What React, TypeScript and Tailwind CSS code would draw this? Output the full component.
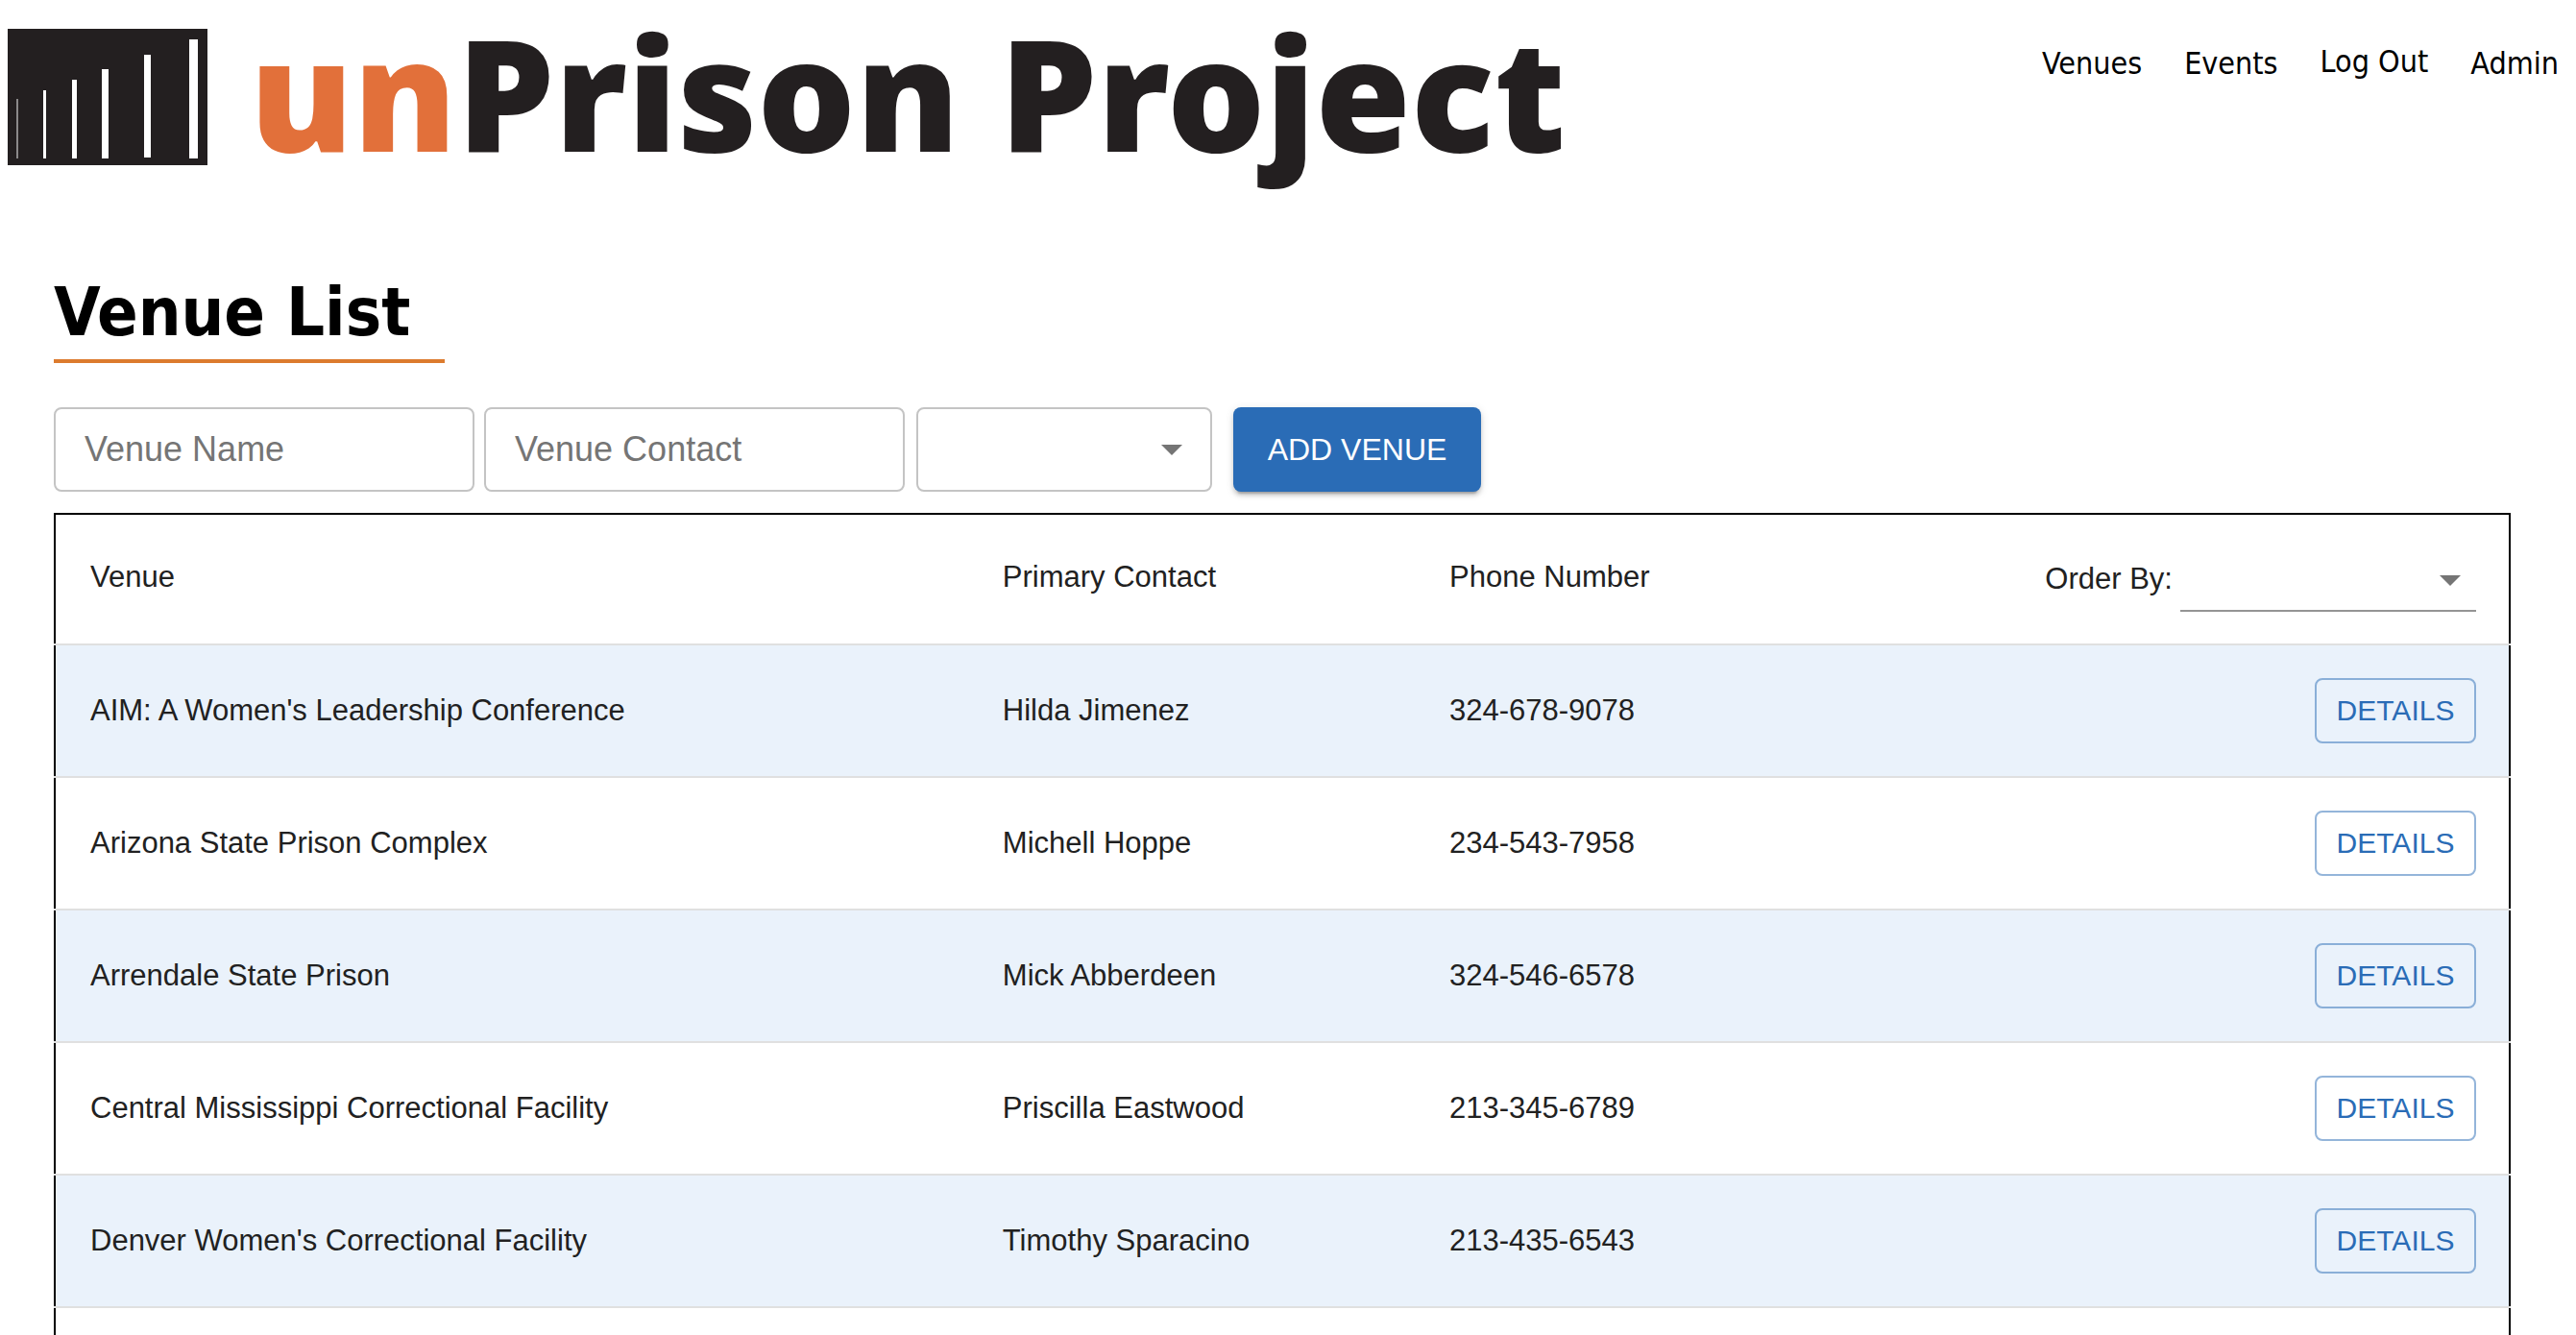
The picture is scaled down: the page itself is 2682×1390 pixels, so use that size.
import React from "react";

type Venue = { name: string; contact: string; phone: string };

const venues: Venue[] = [
  { name: "AIM: A Women's Leadership Conference", contact: "Hilda Jimenez", phone: "324-678-9078" },
  { name: "Arizona State Prison Complex", contact: "Michell Hoppe", phone: "234-543-7958" },
  { name: "Arrendale State Prison", contact: "Mick Abberdeen", phone: "324-546-6578" },
  { name: "Central Mississippi Correctional Facility", contact: "Priscilla Eastwood", phone: "213-345-6789" },
  { name: "Denver Women's Correctional Facility", contact: "Timothy Sparacino", phone: "213-435-6543" },
];

function Logo() {
  return (
    <a href="#home" className="flex h-[204px] items-start pl-2">
      <svg viewBox="0 0 208 142" className="mt-[30px] h-[142px] w-[208px] shrink-0" aria-hidden="true">
        <rect width="208" height="142" fill="#231f20" />
        <rect x="9" y="73" width="2" height="62" fill="#8b898a" />
        <rect x="37" y="64" width="3" height="71" fill="#fff" />
        <rect x="67" y="53" width="5" height="82" fill="#fff" />
        <rect x="98" y="42" width="7" height="93" fill="#fff" />
        <rect x="142" y="27" width="7" height="107" fill="#fff" />
        <rect x="189" y="11" width="9" height="124" fill="#fff" />
      </svg>
      <span className="ml-11 font-['Noto_Sans',sans-serif] text-[161px] leading-[192px] font-black whitespace-nowrap text-[#231f20]">
        <span className="text-[#e2703a]">un</span>Prison Project
      </span>
    </a>
  );
}

function Caret({ className }: { className: string }) {
  return (
    <svg viewBox="0 0 22 11" aria-hidden="true" className={`pointer-events-none absolute h-[11px] w-[22px] ${className}`}>
      <path d="M0 0h22L11 11z" fill="#757575" />
    </svg>
  );
}

function SearchField({ label }: { label: string }) {
  return (
    <input
      type="text"
      aria-label={label}
      placeholder={label}
      className="h-[88px] w-[438px] rounded-lg border-2 border-[#c4c4c4] px-[30px] text-[36px] text-black/85 placeholder:text-[#757575] placeholder:opacity-100"
    />
  );
}

export default function App() {
  return (
    <div className="h-screen overflow-hidden bg-white font-['Liberation_Sans',Arial,sans-serif] text-[#212121]">
      <header className="flex items-start justify-between pr-[18px]">
        <Logo />
        <nav className="flex items-start gap-[44px] pt-11 font-['DejaVu_Sans_Condensed','DejaVu_Sans',sans-serif] text-[32px] leading-[44px] text-black">
          <a href="#venues">Venues</a>
          <a href="#events">Events</a>
          <button type="button" className="-mt-0.5">Log Out</button>
          <a href="#admin">Admin</a>
        </nav>
      </header>

      <main className="pr-[68px] pl-14">
        <h1 className="mt-[76px] inline-block border-b-4 border-[#dc7b2e] pr-9 pb-1 font-['DejaVu_Sans_Condensed','DejaVu_Sans',sans-serif] text-[70px] leading-[90px] font-bold text-black">
          Venue List
        </h1>

        <form className="mt-[46px] flex items-center">
          <div className="flex gap-2.5">
            <SearchField label="Venue Name" />
            <SearchField label="Venue Contact" />
          </div>
          <div className="relative ml-3">
            <select aria-label="Venue filter" className="block h-[88px] w-[308px] appearance-none rounded-lg border-2 border-[#c4c4c4] px-7 text-[32px]">
              <option value=""></option>
            </select>
            <Caret className="top-[39px] right-[31px]" />
          </div>
          <button
            type="button"
            className="ml-[22px] h-[88px] w-[258px] rounded-lg bg-[#2a6cb6] text-[32px] text-white shadow-[0_6px_2px_-4px_rgba(0,0,0,0.2),0_4px_4px_0_rgba(0,0,0,0.14),0_2px_10px_0_rgba(0,0,0,0.12)]"
          >
            ADD VENUE
          </button>
        </form>

        <table className="mt-[22px] w-full table-fixed border-collapse border-2 border-black text-left text-[31px] leading-[44px]">
          <colgroup>
            <col className="w-[37.2%]" />
            <col className="w-[18.2%]" />
            <col className="w-[18.2%]" />
            <col />
          </colgroup>
          <thead>
            <tr className="border-b-2 border-[#e0e0e0]">
              <th className="px-9 pb-1 font-normal">Venue</th>
              <th className="px-9 pb-1 font-normal">Primary Contact</th>
              <th className="px-9 pb-1 font-normal">Phone Number</th>
              <th className="py-[33px] pr-[34px] pl-9 font-normal">
                <div className="flex items-center justify-end gap-2">
                  <label htmlFor="order-by">Order By:</label>
                  <div className="relative">
                    <select id="order-by" className="block h-[68px] w-[308px] appearance-none border-b-2 border-[#949494] px-2">
                      <option value=""></option>
                    </select>
                    <Caret className="top-[30px] right-4" />
                  </div>
                </div>
              </th>
            </tr>
          </thead>
          <tbody>
            {venues.map((v) => (
              <tr key={v.name} className="border-b-2 border-[#e0e0e0] odd:bg-[#eaf2fb]">
                <td className="px-9">{v.name}</td>
                <td className="px-9">{v.contact}</td>
                <td className="px-9">{v.phone}</td>
                <td className="py-[34px] pr-[34px] pl-9">
                  <button
                    type="button"
                    className="ml-auto block h-[68px] w-[168px] rounded-lg border-2 border-[#2a6cb6]/50 text-[30px] text-[#2a6cb6]"
                  >
                    DETAILS
                  </button>
                </td>
              </tr>
            ))}
            <tr>
              <td colSpan={4} className="h-[136px]"></td>
            </tr>
          </tbody>
        </table>
      </main>
    </div>
  );
}
